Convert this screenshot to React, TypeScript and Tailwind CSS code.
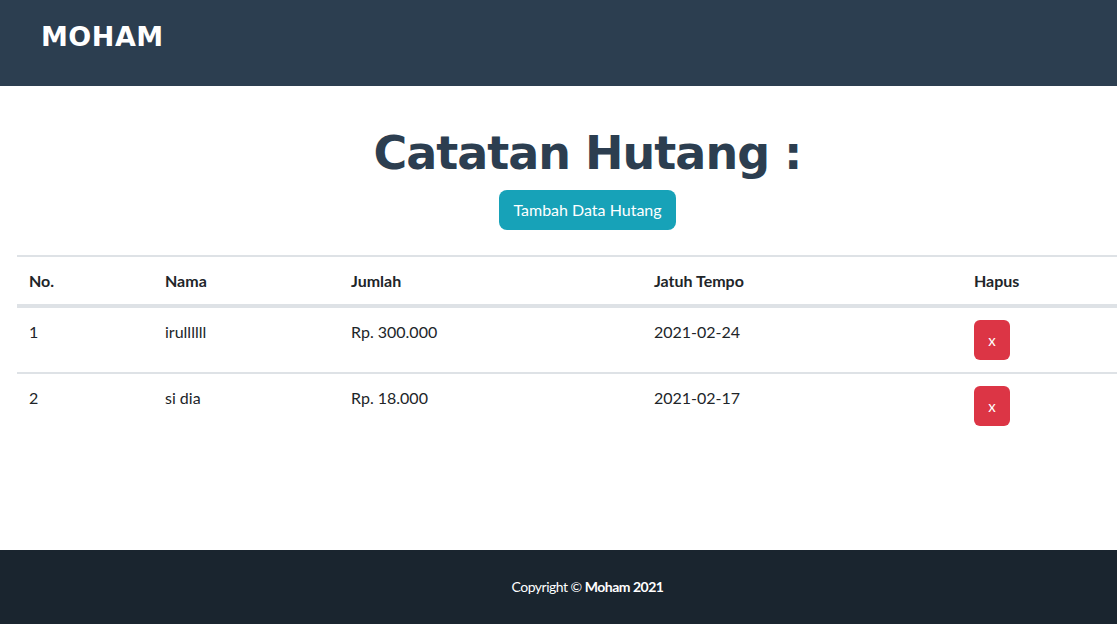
import React from 'react';

const rows = [
  { no: 1, nama: 'irullllll', jumlah: 'Rp. 300.000', tempo: '2021-02-24' },
  { no: 2, nama: 'si dia', jumlah: 'Rp. 18.000', tempo: '2021-02-17' },
];

const App: React.FC = () => {
  return (
    <div className="w-[1117px] h-[624px] overflow-hidden flex flex-col bg-white font-['Lato','Liberation_Sans',sans-serif] text-[#212529]">
      <nav className="h-[86px] shrink-0 bg-[#2c3e50] flex items-center px-[41px]">
        <span className="font-['DejaVu_Sans',sans-serif] font-bold text-[27px] text-white tracking-[0.5px] -mt-[11px]">MOHAM</span>
      </nav>

      <main className="h-[464px] shrink-0 flex flex-col">
        <div className="w-[1175px] flex flex-col items-center pt-[32px]">
          <h1 className="font-['DejaVu_Sans',sans-serif] font-bold text-[46px] leading-[70px] text-[#2c3e50] tracking-[-1px]">
            Catatan Hutang :
          </h1>
          <button className="mt-[2px] h-[40px] px-[14px] rounded-[8px] bg-[#17a2b8] text-white text-[16px]">
            Tambah Data Hutang
          </button>
        </div>

        <div className="pl-[17px] mt-[25px] overflow-hidden">
          <table className="w-[1200px] border-collapse text-[16px] text-left">
            <thead>
              <tr className="border-t-2 border-[#dee2e6] border-b-4">
                <th className="w-[136px] px-[12px] h-[50px] font-bold">No.</th>
                <th className="w-[186px] px-[12px] font-bold">Nama</th>
                <th className="w-[303px] px-[12px] font-bold">Jumlah</th>
                <th className="w-[320px] px-[12px] font-bold">Jatuh Tempo</th>
                <th className="px-[12px] font-bold">Hapus</th>
              </tr>
            </thead>
            <tbody>
              {rows.map((r) => (
                <tr key={r.no} className="border-b-2 border-[#dee2e6] last:border-b-0">
                  <td className="px-[12px] pt-[12px] pb-[12px] align-top leading-[24px]">{r.no}</td>
                  <td className="px-[12px] pt-[12px] align-top leading-[24px]">{r.nama}</td>
                  <td className="px-[12px] pt-[12px] align-top leading-[24px]">{r.jumlah}</td>
                  <td className="px-[12px] pt-[12px] align-top leading-[24px]">{r.tempo}</td>
                  <td className="px-[12px] pt-[12px] pb-[12px] align-top">
                    <button className="w-[36px] h-[40px] rounded-[6px] bg-[#dc3545] text-white text-[15px] leading-none">x</button>
                  </td>
                </tr>
              ))}
            </tbody>
          </table>
        </div>
      </main>

      <footer className="flex-1 bg-[#1a252f] flex justify-center pt-[26px] pl-[58px]">
        <p className="text-white text-[14px] tracking-[-0.5px]">
          Copyright © <span className="font-bold">Moham 2021</span>
        </p>
      </footer>
    </div>
  );
};

export default App;
